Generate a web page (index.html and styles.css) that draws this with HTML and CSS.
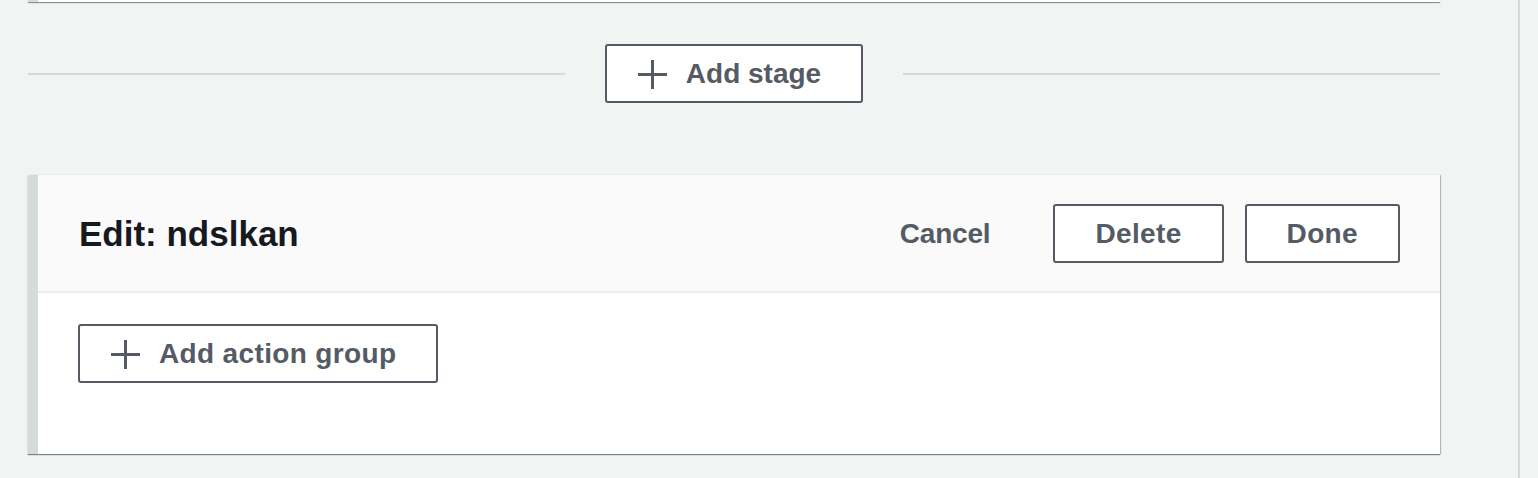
FILE: index.html
```html
<!DOCTYPE html>
<html>
<head>
<meta charset="utf-8">
<link rel="stylesheet" href="styles.css">
</head>
<body>
<div class="page">
  <div class="main">
    <div class="prev-card"></div>
    <div class="stage-row">
      <div class="rule"></div>
      <button class="btn btn-icon">
        <svg class="plus" viewBox="0 0 29 29" width="29" height="29"><path d="M14.5 0V29M0 14.5H29" stroke="currentColor" stroke-width="3" fill="none"/></svg>
        <span>Add stage</span>
      </button>
      <div class="rule"></div>
    </div>
    <div class="card">
      <div class="card-head">
        <h2 class="title">Edit: ndslkan</h2>
        <div class="actions">
          <button class="link">Cancel</button>
          <button class="btn btn-wide">Delete</button>
          <button class="btn btn-wide">Done</button>
        </div>
      </div>
      <div class="card-body">
        <button class="btn btn-icon btn-wide">
          <svg class="plus" viewBox="0 0 29 29" width="29" height="29"><path d="M14.5 0V29M0 14.5H29" stroke="currentColor" stroke-width="3" fill="none"/></svg>
          <span>Add action group</span>
        </button>
      </div>
    </div>
  </div>
  <div class="side"></div>
</div>
</body>
</html>
```

FILE: styles.css
```css
* { box-sizing: border-box; }
html, body {
  margin: 0;
  padding: 0;
  background: #f2f3f3;
  font-family: "Liberation Sans", Arial, sans-serif;
}
.page {
  display: flex;
  height: 478px;
  overflow: hidden;
}
.main {
  width: 1518px;
  padding: 0 78px 0 28px;
}
.side {
  flex: 1;
  border-left: 2px solid #d5d9d9;
}
.prev-card {
  height: 2px;
  background: #fff;
  border-left: 10px solid #d5dbdb;
  box-shadow: 0 1px 1px 0 rgba(0, 28, 36, 0.5);
}
.stage-row {
  display: flex;
  align-items: center;
  margin-top: 42px;
}
.rule {
  flex: 1;
  height: 2px;
  background: #d5dbdb;
}
.stage-row .btn {
  margin: 0 40px;
}
.btn {
  display: inline-flex;
  align-items: center;
  height: 59px;
  padding: 1px 40px 0;
  border: 2px solid #545b64;
  border-radius: 3px;
  background: #fff;
  color: #545b64;
  font-family: inherit;
  font-weight: 700;
  font-size: 28px;
  cursor: pointer;
}
.btn-wide {
  letter-spacing: 0.35px;
}
.btn-icon {
  padding-left: 31px;
  gap: 19px;
}
.plus {
  display: block;
  flex: none;
}
.link {
  background: none;
  border: 0;
  padding: 2px 0 0;
  color: #545b64;
  font-family: inherit;
  font-weight: 700;
  font-size: 28px;
  letter-spacing: -0.2px;
  margin-right: 42px;
}
.card {
  margin-top: 72px;
  background: #fff;
  border-left: 10px solid #d5dbdb;
  box-shadow: 0 1px 1px 0 rgba(0, 28, 36, 0.5), 1px 0 1px 0 rgba(0, 28, 36, 0.2);
}
.card-head {
  display: flex;
  align-items: center;
  justify-content: space-between;
  height: 118px;
  padding: 2px 40px 0 41px;
  background: #fafafa;
  border-bottom: 2px solid #eaeded;
}
.title {
  margin: 0;
  font-size: 35px;
  font-weight: 700;
  color: #16191f;
}
.actions {
  display: flex;
  align-items: center;
  gap: 21px;
  margin-top: -2px;
}
.card-body {
  padding: 31px 40px 71px;
}
```
